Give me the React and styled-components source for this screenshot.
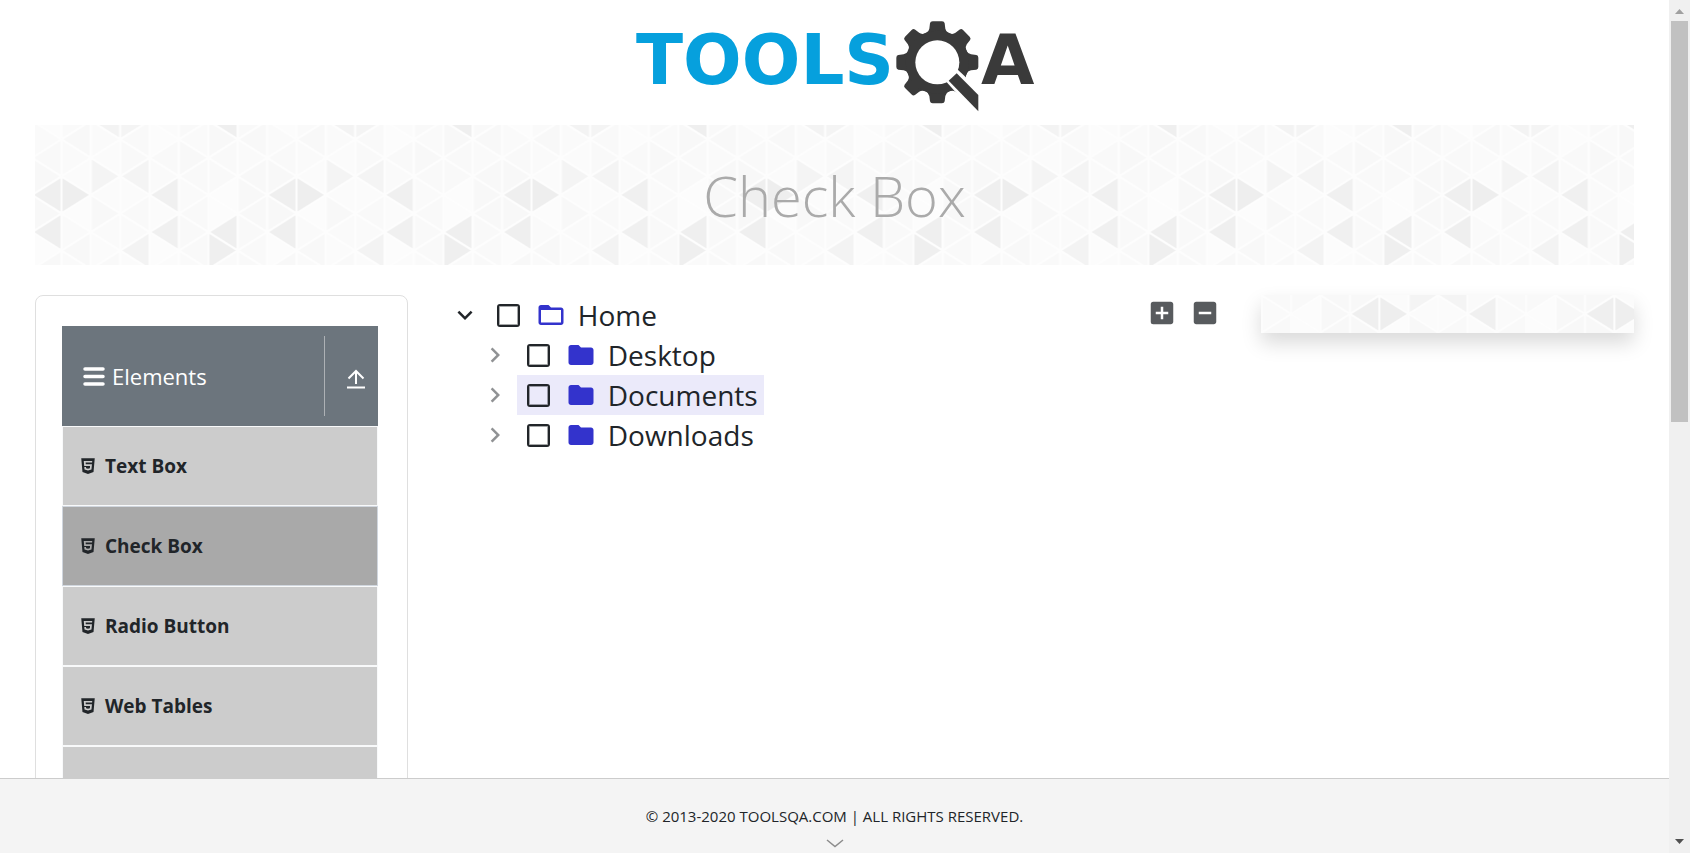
import React, { useId } from "react";
import styled, { createGlobalStyle } from "styled-components";
import { FaHtml5 } from "react-icons/fa";
import {
  MdAddBox,
  MdChevronRight,
  MdFolder,
  MdFolderOpen,
  MdIndeterminateCheckBox,
  MdKeyboardArrowDown,
} from "react-icons/md";

const GlobalStyle = createGlobalStyle`
  *, *::before, *::after { box-sizing: border-box; }
  body {
    margin: 0;
    background: #fff;
    color: #212529;
    font-family: "Open Sans", "Noto Sans", sans-serif;
    font-size: 20px;
    line-height: 30px;
  }
`;

const Window = styled.div`
  display: flex;
  height: 100vh;
  overflow: hidden;
`;

const Page = styled.div`
  flex: 1;
  min-width: 0;
  display: flex;
  flex-direction: column;
`;

const Body = styled.div`
  flex: 1;
  min-height: 0;
  overflow: hidden;
  padding: 0 35px;
`;

const Header = styled.header`
  display: flex;
  justify-content: center;
  padding: 10px 0 5px;
`;

const LogoLink = styled.a`
  display: block;
  height: 110px;
`;

const Banner = styled.div`
  position: relative;
  display: flex;
  align-items: center;
  justify-content: center;
  height: 140px;
  margin-bottom: 30px;
  overflow: hidden;
`;

const BannerTitle = styled.h1`
  position: relative;
  margin: 0;
  color: #aaa;
  font-size: 56px;
  font-weight: 300;
  line-height: 70px;
`;

const PatternSvg = styled.svg`
  position: absolute;
  inset: 0;
  width: 100%;
  height: 100%;
`;

const Row = styled.div`
  display: flex;
  align-items: flex-start;
  margin: 0 -18px;
`;

const Column = styled.div`
  width: ${(p) => p.$span * 25}%;
  padding: 0 18px;
`;

const Card = styled.nav`
  padding: 30px 29px 30px 26px;
  border: 1px solid #dfdfdf;
  border-radius: 8px;
`;

const GroupHeader = styled.button`
  display: flex;
  align-items: center;
  width: 100%;
  height: 100px;
  padding: 0 12px 0 21px;
  border: 0;
  background: #6c757d;
  color: #fff;
  font: inherit;
  font-size: 22px;
  text-align: left;
`;

const GroupTitle = styled.span`
  flex: 1;
  display: flex;
  align-items: center;
  gap: 7px;
`;

const GroupArrow = styled.span`
  display: flex;
  align-items: center;
  justify-content: flex-end;
  width: 42px;
  height: 80px;
  padding-top: 6px;
  border-left: 1px solid #adb1b5;
`;

const Menu = styled.ul`
  margin: 0;
  padding: 0;
  list-style: none;
`;

const MenuItem = styled.li`
  height: 80px;
  border: 1px solid ${(p) => (p.$active ? "#d0d6de" : "#f8f9fa")};
  background: ${(p) => (p.$active ? "#a9a9a9" : "#ccc")};
`;

const MenuLink = styled.a`
  display: flex;
  align-items: center;
  gap: 8px;
  height: 100%;
  padding-left: 16px;
  color: #212529;
  font-size: 19px;
  font-weight: 700;
  text-decoration: none;

  svg {
    flex: none;
  }
`;

const TreePanel = styled.div`
  display: flex;
  align-items: flex-start;
`;

const TreeList = styled.ul`
  margin: 0;
  padding: 0 0 0 ${(p) => (p.$nested ? "30px" : "0")};
  list-style: none;
`;

const RootTree = styled(TreeList)`
  flex: 1;
`;

const TreeRow = styled.div`
  display: flex;
  align-items: center;
  height: 40px;
`;

const Toggle = styled.button`
  display: flex;
  align-items: center;
  justify-content: center;
  width: 43px;
  height: 40px;
  padding: 0;
  border: 0;
  background: none;
  color: ${(p) => (p.$open ? "#212529" : "#909294")};
`;

const NodeLabel = styled.label`
  display: flex;
  align-items: center;
  gap: 12px;
  height: 40px;
  padding: 0 6px 0 10px;
  background: ${(p) => (p.$hovered ? "#ebeafa" : "transparent")};
  font-size: 28px;

  svg {
    flex: none;
    color: #33c;
    margin-left: 4px;
  }
`;

const CheckBox = styled.input`
  appearance: none;
  width: 23px;
  height: 23px;
  margin: 0;
  border: 2px solid #212529;
  border-radius: 3px;
  box-shadow: inset 0 0 0 1px rgba(33, 37, 41, 0.4);
`;

const Options = styled.div`
  display: flex;
  gap: 3px;
`;

const OptionButton = styled.button`
  display: flex;
  align-items: center;
  justify-content: center;
  width: 40px;
  height: 36px;
  padding: 0;
  border: 0;
  background: none;
  color: #585b5e;
`;

const Aside = styled.aside`
  position: relative;
  height: 38px;
  box-shadow: 0 10px 20px rgba(0, 0, 0, 0.15);
`;

const Footer = styled.footer`
  display: flex;
  flex-direction: column;
  align-items: center;
  height: 75px;
  padding-top: 22px;
  border-top: 1px solid #ccc;
  background: #f4f4f4;
  font-size: 15px;
`;

const FooterText = styled.span`
  line-height: 30px;
`;

const FooterArrow = styled.svg`
  margin-top: 8px;
`;

const ScrollTrack = styled.div`
  display: flex;
  flex-direction: column;
  align-items: center;
  width: 21px;
  background: #f0f0f0;
`;

const ScrollThumb = styled.div`
  width: 17px;
  height: 47%;
  margin-bottom: auto;
  background: #c1c1c1;
`;

/* Triangle shades by column; each column runs from row -4 to row 4. */
const SHADES = [
  ["fafafa", "f8f8f8", "fafafa", "fbfbfb", "eeeeee", "fcfcfc", "fafafa", "f8f8f8", "fafafa"],
  ["f3f3f3", "fafafa", "fbfbfb", "f4f4f4", "fbfbfb", "f8f8f8", "fafafa", "fbfbfb", "f9f9f9"],
  ["f4f4f4", "f9f9f9", "f9f9f9", "f4f4f4", "fbfbfb", "f9f9f9", "fafafa", "f3f3f3", "fbfbfb"],
  ["fbfbfb", "fcfcfc", "f9f9f9", "fafafa", "f0f0f0", "fbfbfb", "f0f0f0", "fcfcfc", "fbfbfb"],
  ["f9f9f9", "fafafa", "f8f8f8", "f9f9f9", "fafafa", "f9f9f9", "f9f9f9", "f9f9f9", "fafafa"],
  ["efefef", "f8f8f8", "f9f9f9", "f9f9f9", "fcfcfc", "fcfcfc", "efefef", "efefef", "fafafa"],
  ["f9f9f9", "f8f8f8", "fafafa", "f8f8f8", "f8f8f8", "f8f8f8", "f9f9f9", "f9f9f9", "f9f9f9"],
  ["fcfcfc", "fafafa", "f9f9f9", "f8f8f8", "efefef", "f8f8f8", "efefef", "fcfcfc", "f8f8f8"],
];
const COL = 29.375;
const HALF = 18.54;

const TRIANGLES = SHADES.flatMap((rows, c) =>
  rows.map((shade, r) => {
    const v = r - 4;
    const pointsRight = (c + v + 8) % 2 === 0;
    const left = c * COL;
    const right = left + COL;
    const base = pointsRight ? left : right;
    const apex = pointsRight ? right : left;
    return {
      key: `${c}:${v}`,
      fill: `#${shade}`,
      points: `${base},${(v - 1) * HALF} ${base},${(v + 1) * HALF} ${apex},${v * HALF}`,
    };
  })
);

function TrianglePattern() {
  const id = useId();
  return (
    <PatternSvg aria-hidden="true">
      <defs>
        <pattern id={id} x="-68" y="-111" width="235" height="222" patternUnits="userSpaceOnUse">
          <g transform="translate(0 111)" stroke="#fdfdfd" strokeWidth="2" strokeLinejoin="round">
            {TRIANGLES.map((t) => (
              <polygon key={t.key} points={t.points} fill={t.fill} />
            ))}
          </g>
        </pattern>
      </defs>
      <svg x="50%" y="50%" overflow="visible">
        <rect x="-3000" y="-110" width="6000" height="220" fill={`url(#${id})`} />
      </svg>
    </PatternSvg>
  );
}

const TEETH = [0, 45, 90, 135, 180, 225, 270, 315];

function Logo() {
  return (
    <svg width="430" height="110" viewBox="0 0 1290 330" role="img" aria-label="TOOLSQA">
      <g fontFamily="DejaVu Sans" fontWeight="700" fontSize="207">
        <text x="48" y="221" fill="#06a0dd">TOOLS</text>
        <text x="1083" y="221" fill="#3a3a3a">A</text>
      </g>
      <g transform="translate(9 4)">
        <g fill="#3a3a3a">
          {TEETH.map((angle) => (
            <path
              key={angle}
              transform={`rotate(${angle} 943 153)`}
              d="M908 66 Q918 60 919 52 L921 36 Q922 30 929 30 L957 30 Q964 30 965 36 L967 52 Q968 60 978 66 L978 90 L908 90 Z"
            />
          ))}
          <circle cx="943" cy="153" r="95" />
        </g>
        <circle cx="943" cy="153" r="66" fill="#fff" />
        <path d="M968 209 L1002 173 L1076 242 L1076 330 Z" fill="#fff" />
        <path d="M977 208 L1001 186 L1066 251 L1066 300 Z" fill="#3a3a3a" />
      </g>
    </svg>
  );
}

function HamburgerIcon() {
  return (
    <svg width="22" height="20" viewBox="0 0 22 20" aria-hidden="true">
      <path d="M2 3H20M2 10.500H20M2 18H20" stroke="#fff" strokeWidth="3.500" strokeLinecap="round" />
    </svg>
  );
}

function UploadIcon() {
  return (
    <svg width="20" height="20" viewBox="0 0 20 20" fill="none" stroke="#fff" strokeWidth="2" aria-hidden="true">
      <path d="M10 15V2M2.500 9.500L10 2L17.500 9.500M1 18.500H19" />
    </svg>
  );
}

function TreeNode({ id, name, open, hovered, children }) {
  const Folder = open ? MdFolderOpen : MdFolder;
  const Arrow = open ? MdKeyboardArrowDown : MdChevronRight;
  return (
    <li>
      <TreeRow>
        <Toggle type="button" aria-label="Toggle" $open={open}>
          <Arrow size={30} />
        </Toggle>
        <NodeLabel htmlFor={id} $hovered={hovered}>
          <CheckBox type="checkbox" id={id} />
          <Folder size={30} />
          <span>{name}</span>
        </NodeLabel>
      </TreeRow>
      {children}
    </li>
  );
}

const MENU = ["Text Box", "Check Box", "Radio Button", "Web Tables", ""];

export default function App() {
  return (
    <Window>
      <GlobalStyle />
      <Page>
        <Body>
          <Header>
            <LogoLink href="#">
              <Logo />
            </LogoLink>
          </Header>
          <Banner>
            <TrianglePattern />
            <BannerTitle>Check Box</BannerTitle>
          </Banner>
          <Row>
            <Column $span={1}>
              <Card>
                <GroupHeader type="button">
                  <GroupTitle>
                    <HamburgerIcon />
                    Elements
                  </GroupTitle>
                  <GroupArrow>
                    <UploadIcon />
                  </GroupArrow>
                </GroupHeader>
                <Menu>
                  {MENU.map((name) => (
                    <MenuItem key={name} $active={name === "Check Box"}>
                      {name && (
                        <MenuLink href="#">
                          <FaHtml5 size={18} />
                          {name}
                        </MenuLink>
                      )}
                    </MenuItem>
                  ))}
                </Menu>
              </Card>
            </Column>
            <Column $span={2}>
              <TreePanel>
                <RootTree>
                  <TreeNode id="home" name="Home" open>
                    <TreeList $nested>
                      <TreeNode id="desktop" name="Desktop" />
                      <TreeNode id="documents" name="Documents" hovered />
                      <TreeNode id="downloads" name="Downloads" />
                    </TreeList>
                  </TreeNode>
                </RootTree>
                <Options>
                  <OptionButton type="button" aria-label="Expand all">
                    <MdAddBox size={30} />
                  </OptionButton>
                  <OptionButton type="button" aria-label="Collapse all">
                    <MdIndeterminateCheckBox size={30} />
                  </OptionButton>
                </Options>
              </TreePanel>
            </Column>
            <Column $span={1}>
              <Aside>
                <TrianglePattern />
              </Aside>
            </Column>
          </Row>
        </Body>
        <Footer>
          <FooterText>© 2013-2020 TOOLSQA.COM | ALL RIGHTS RESERVED.</FooterText>
          <FooterArrow width="18" height="9" viewBox="0 0 18 9" fill="none" stroke="#8c8c8c" strokeWidth="1.500" aria-hidden="true">
            <path d="M1 1L9 7.500L17 1" />
          </FooterArrow>
        </Footer>
      </Page>
      <ScrollTrack aria-hidden="true">
        <svg width="21" height="21" viewBox="0 0 21 21">
          <path d="M6 14L10.500 9L15 14Z" fill="#a0a0a0" />
        </svg>
        <ScrollThumb />
        <svg width="21" height="21" viewBox="0 0 21 21">
          <path d="M6 7L10.500 12L15 7Z" fill="#505050" />
        </svg>
      </ScrollTrack>
    </Window>
  );
}
